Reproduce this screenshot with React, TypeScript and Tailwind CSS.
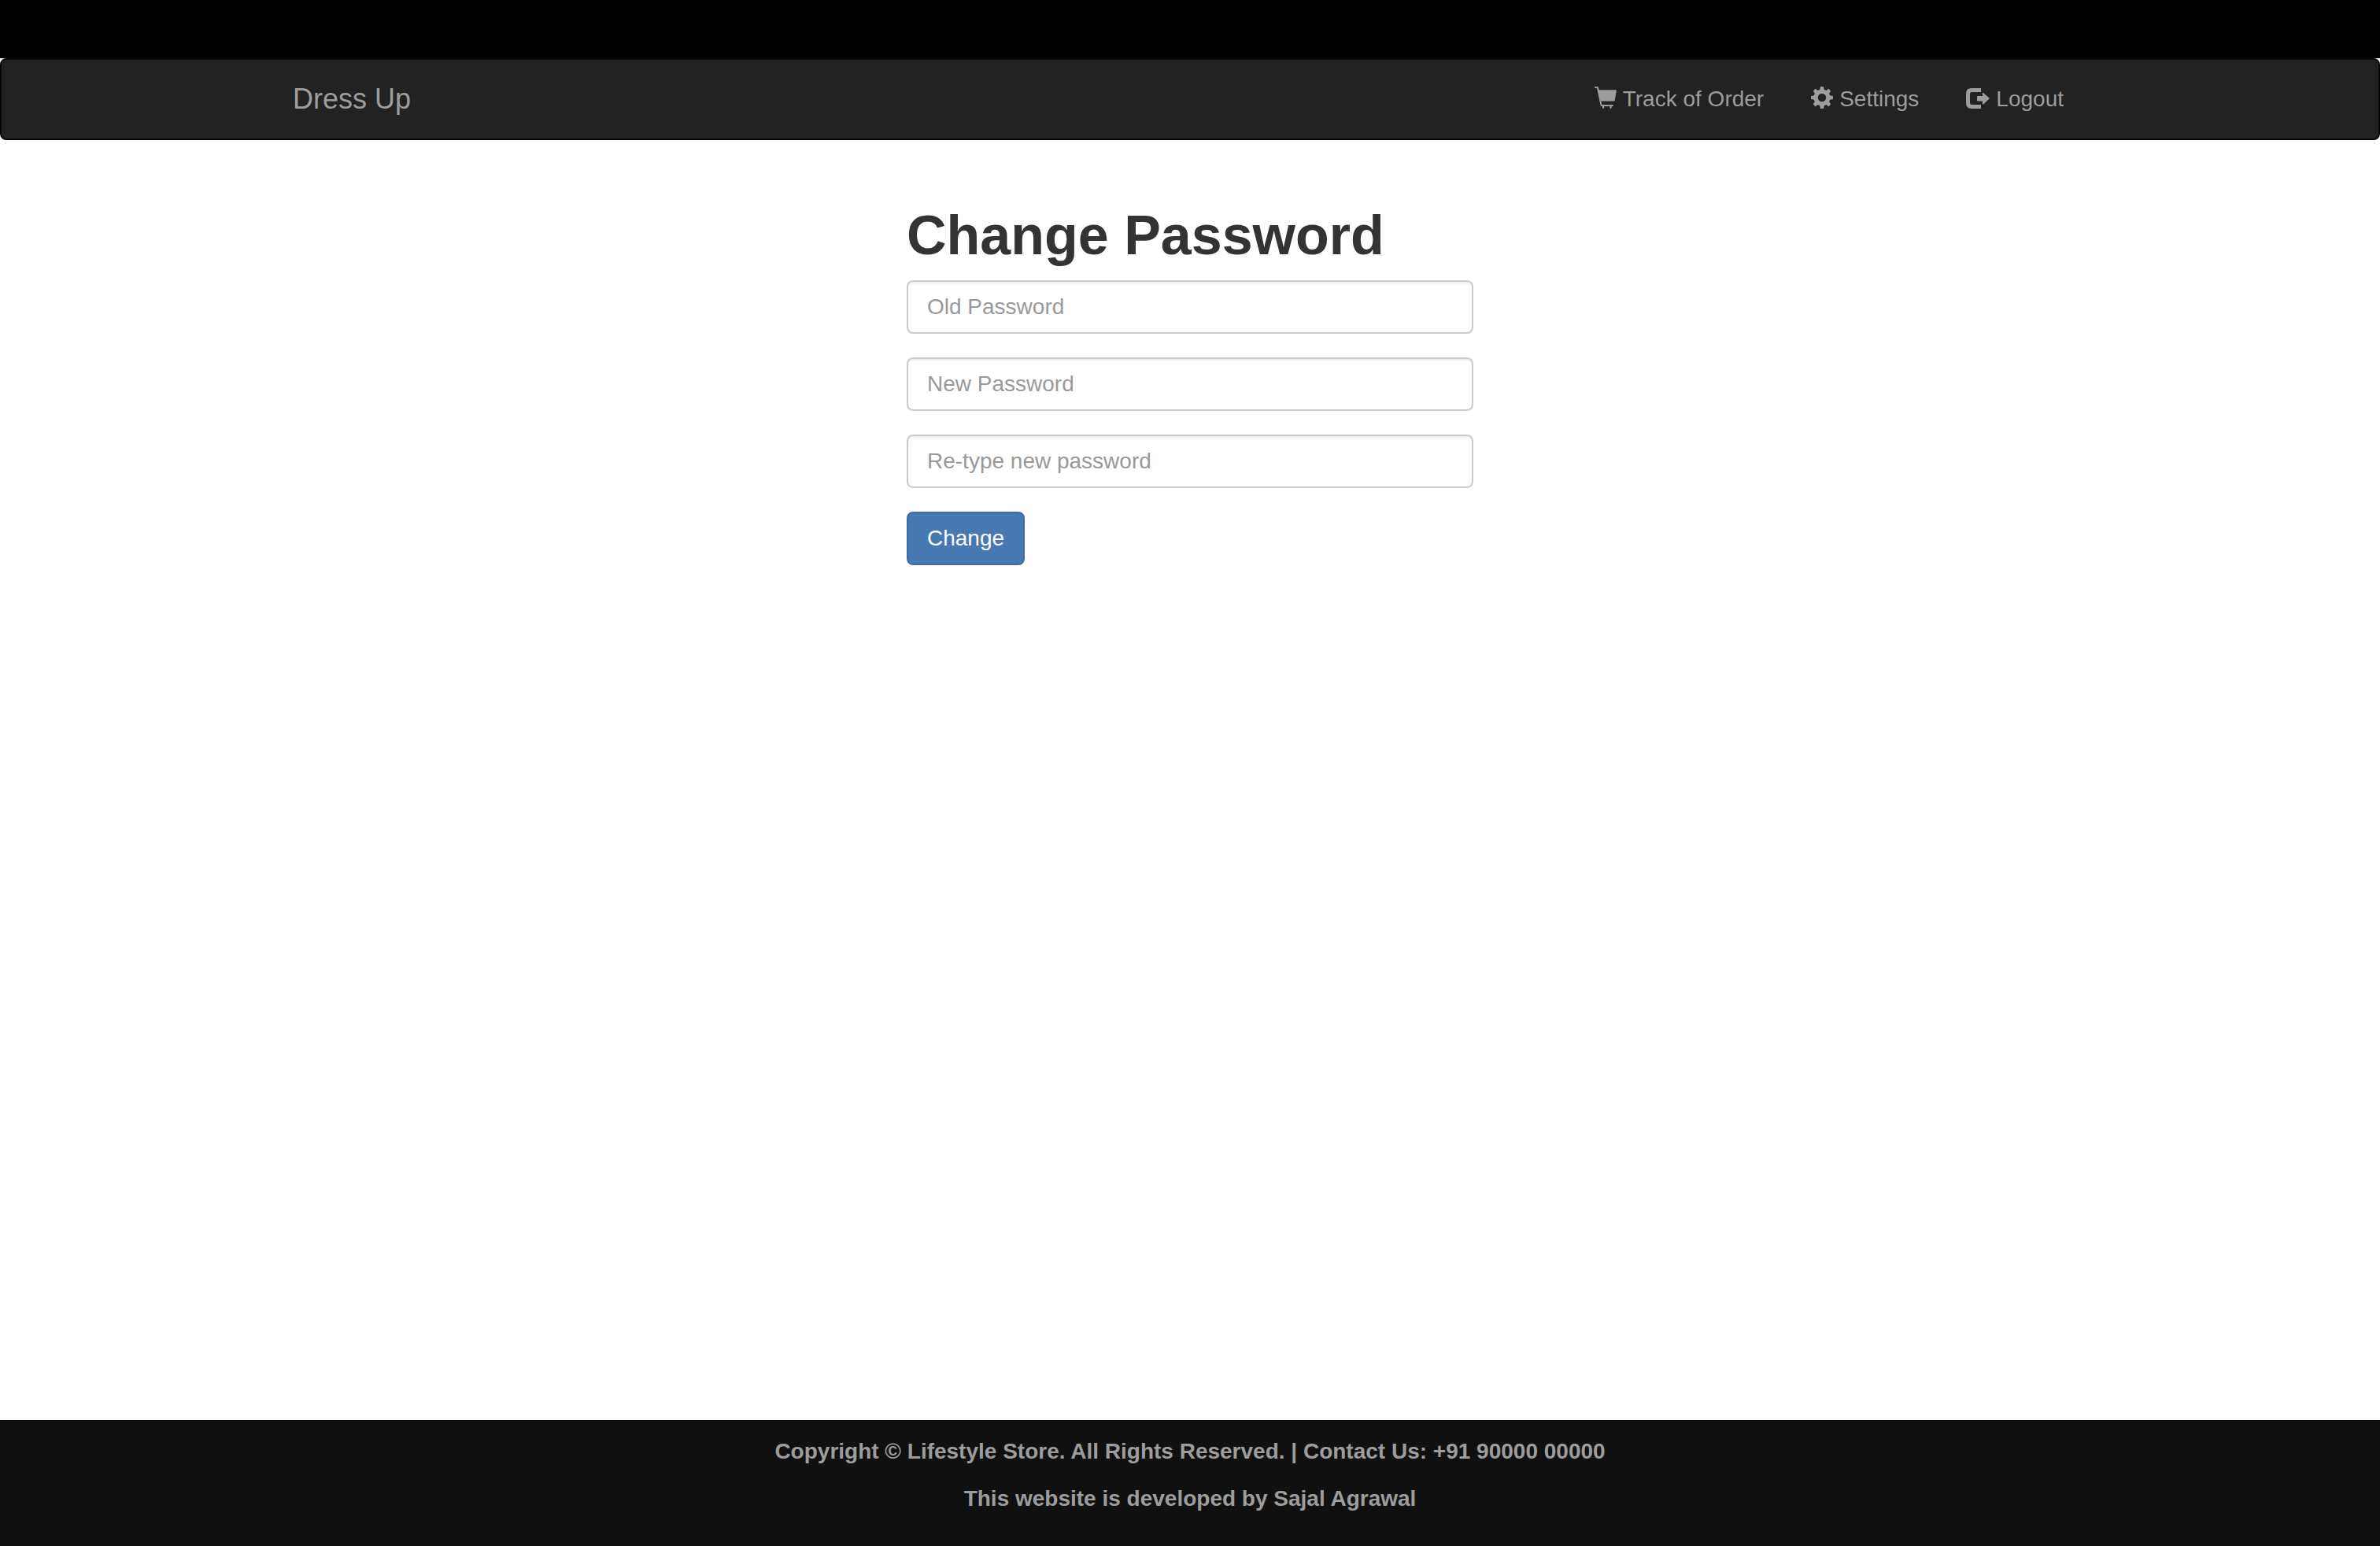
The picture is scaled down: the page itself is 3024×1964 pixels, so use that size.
import React from "react";

const CartIcon = () => (
  <svg viewBox="0 0 28 28" className="mb-1 size-7 shrink-0" fill="currentColor" aria-hidden="true">
    <path d="M1 0h2.800q.9 0 1.100.9L5.700 4.200h21.300q1 0 .9 1L25.700 17.400q-.2 1.200-1.400 1.200H8.400l.8 3.800q.1.600.8.600h13q1 0 1 1t-1 1h-1.400v2q0 1-1.100 1t-1.100-1v-2h-7.200v2q0 1-1.100 1t-1.100-1v-2H8.700q-.9 0-1.100-.9L3 2H1q-1 0-1-1t1-1z" />
  </svg>
);

const CogIcon = () => (
  <svg viewBox="0 0 28 28" className="mb-1 size-7 shrink-0" fill="currentColor" aria-hidden="true">
    <path
      fillRule="evenodd"
      d="M12.600 0h2.800q.6 0 .7.600l.6 3.200 2.600 1.100 2.600-1.900q.5-.3.900.1l2.100 2.100q.4.400.1.900l-1.900 2.600 1.100 2.600 3.200.6q.6.100.6.700v2.800q0 .6-.6.700l-3.200.6-1.100 2.600 1.900 2.600q.3.500-.1.900l-2.100 2.100q-.4.400-.9.100l-2.600-1.900-2.600 1.100-.6 3.200q-.1.600-.7.600h-2.800q-.6 0-.7-.6l-.6-3.200-2.600-1.100-2.600 1.900q-.5.300-.9-.1l-2.100-2.100q-.4-.4-.1-.9l1.900-2.600-1.100-2.600-3.200-.6q-.6-.1-.6-.7v-2.800q0-.6.600-.7l3.200-.6 1.100-2.600-1.900-2.600q-.3-.5.100-.9l2.100-2.100q.4-.4.900-.1l2.600 1.900 2.600-1.100.6-3.200q.1-.6.700-.6zM14 8.800a5.200 5.200 0 1 0 0 10.400a5.200 5.200 0 1 0 0-10.400z"
    />
  </svg>
);

const LogoutIcon = () => (
  <svg viewBox="0 0 30 28" className="mb-1 h-7 w-[30px] shrink-0" fill="currentColor" aria-hidden="true">
    <path d="M7 2h11.500q.5 0 .5.500v4q0 .5-.5.500H7.500Q5 7 5 9.500v11Q5 23 7.500 23h11q.5 0 .5.500v4q0 .5-.5.500H7q-7 0-7-7V9q0-7 7-7z" />
    <path d="M22 8l7.500 6.600q.5.500 0 1L22 22.400q-1 .7-1-.5V18.500h-6q-1 0-1-1v-4.600q0-1 1-1h6V8.500q0-1.200 1-.5z" />
  </svg>
);

const links = [
  { label: "Track of Order", Icon: CartIcon },
  { label: "Settings", Icon: CogIcon },
  { label: "Logout", Icon: LogoutIcon },
];

const fields = ["Old Password", "New Password", "Re-type new password"];

export default function App() {
  return (
    <div className="flex min-h-screen flex-col bg-white font-['Liberation_Sans',Arial,sans-serif] text-[28px] leading-10 text-[#333333]">
      <div className="h-[74px] bg-black" />
      <nav className="rounded-lg border-2 border-[#080808] bg-[#222222] text-[#9d9d9d]">
        <div className="mx-auto flex max-w-[2340px] items-center justify-between px-[30px]">
          <a href="#" className="py-[30px] text-4xl leading-10">Dress Up</a>
          <ul className="flex">
            {links.map(({ label, Icon }) => (
              <li key={label}>
                <a href="#" className="flex items-center gap-2 px-[30px] py-[30px]">
                  <Icon />
                  {label}
                </a>
              </li>
            ))}
          </ul>
        </div>
      </nav>
      <main className="mx-auto w-full max-w-[720px] grow pt-20">
        <h1 className="mb-4 text-[70px] leading-[82px] font-bold">Change Password</h1>
        <form className="flex flex-col items-start gap-[30px]">
          {fields.map((f) => (
            <input
              key={f}
              type="password"
              aria-label={f}
              placeholder={f}
              className="h-[68px] w-full rounded-lg border-2 border-[#cccccc] bg-white px-6 shadow-[inset_0_2px_2px_rgba(0,0,0,0.075)] placeholder:text-[#999999]"
            />
          ))}
          <button type="button" className="h-[68px] rounded-lg border-2 border-[#3e6da4] bg-[#4679b2] px-6 text-white">
            Change
          </button>
        </form>
      </main>
      <footer className="bg-[#101010] pt-5 pb-10 text-center font-bold text-[#9d9d9d]">
        <p className="mb-5">Copyright © Lifestyle Store. All Rights Reserved. | Contact Us: +91 90000 00000</p>
        <p>This website is developed by Sajal Agrawal</p>
      </footer>
    </div>
  );
}
